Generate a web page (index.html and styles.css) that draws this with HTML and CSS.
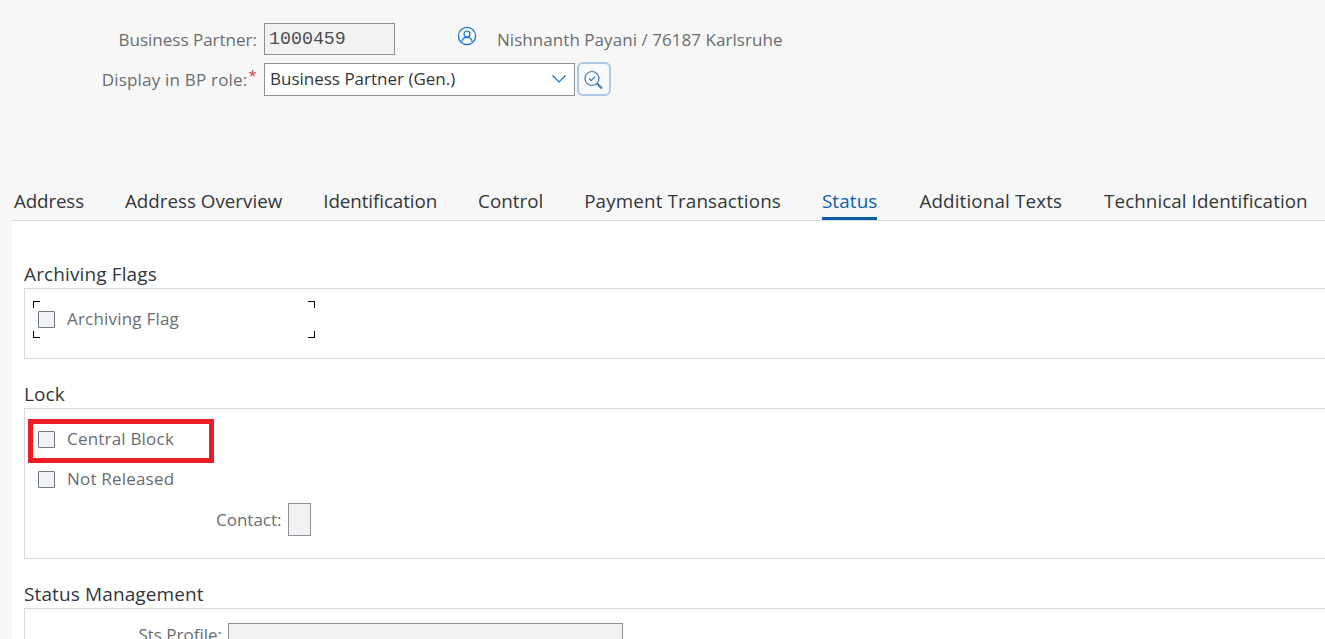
FILE: index.html
```html
<!DOCTYPE html>
<html lang="en">
<head>
    <meta charset="UTF-8">
    <meta name="viewport" content="width=device-width, initial-scale=1.0">
    <title>Business Partner</title>
    <link rel="stylesheet" href="styles.css">
</head>
<body>
    <header class="bp-header">
        <div class="field-row">
            <label class="field-label label-partner">Business Partner:</label>
            <div class="input-readonly input-partner">1000459</div>
            <svg class="person-icon" width="20" height="20" viewBox="0 0 20 20" fill="none" stroke="#0a6ed1" stroke-width="1.2">
                <circle cx="10" cy="10" r="8.6"/>
                <circle cx="10" cy="8" r="3"/>
                <path d="M4.8 15.6c.5-2.8 2.6-4.2 5.2-4.2s4.700 1.400 5.200 4.200"/>
            </svg>
            <span class="partner-name">Nishnanth Payani / 76187 Karlsruhe</span>
        </div>
        <div class="field-row role-row">
            <label class="field-label label-role">Display in BP role:<span class="required">*</span></label>
            <div class="select-box">
                <span>Business Partner (Gen.)</span>
                <svg width="16" height="10" viewBox="0 0 16 10" fill="none" stroke="#0a6ed1" stroke-width="1.2">
                    <path d="M1.500 1.500L8 8l6.500-6.500"/>
                </svg>
            </div>
            <button class="icon-button" type="button">
                <svg width="20" height="20" viewBox="0 0 20 20" fill="none" stroke="#3f7cb5" stroke-width="1.200">
                    <circle cx="8" cy="8.500" r="7"/>
                    <path d="M5 8.500l2.200 2.200 3.800-4.200"/>
                    <path d="M13 13.500l5 5" stroke-width="2.200"/>
                </svg>
            </button>
        </div>
    </header>

    <nav class="tabs">
        <a class="tab tab-first">Address</a>
        <a class="tab">Address Overview</a>
        <a class="tab tab-narrow">Identification</a>
        <a class="tab">Control</a>
        <a class="tab tab-wide">Payment Transactions</a>
        <a class="tab tab-wide tab-active">Status</a>
        <a class="tab tab-wide tab-late">Additional Texts</a>
        <a class="tab tab-last">Technical Identification</a>
    </nav>

    <main class="content">
        <h2 class="section-title title-first">Archiving Flags</h2>
        <section class="panel panel-archive">
            <div class="focus-frame">
                <i class="corner corner-tl"></i>
                <i class="corner corner-tr"></i>
                <i class="corner corner-bl"></i>
                <i class="corner corner-br"></i>
                <div class="check-row">
                    <span class="checkbox"></span>
                    <span class="check-label">Archiving Flag</span>
                </div>
            </div>
        </section>

        <h2 class="section-title">Lock</h2>
        <section class="panel panel-lock">
            <div class="check-row row-marked">
                <span class="checkbox"></span>
                <span class="check-label">Central Block</span>
                <i class="red-box"></i>
            </div>
            <div class="check-row row-second">
                <span class="checkbox"></span>
                <span class="check-label">Not Released</span>
            </div>
            <div class="contact-row">
                <label class="field-label">Contact:</label>
                <div class="input-contact"></div>
            </div>
        </section>

        <h2 class="section-title">Status Management</h2>
        <section class="panel panel-status">
            <label class="field-label label-profile">Sts Profile:</label>
            <div class="input-profile"></div>
        </section>
    </main>
</body>
</html>
```

FILE: styles.css
```css
html, body {
    height: 639px;
    overflow: hidden;
}

body {
    margin: 0;
    background-color: #f7f7f7;
    font-family: 'Open Sans', 'Noto Sans', sans-serif;
    color: #32363a;
}

.bp-header {
    height: 185px;
    padding-top: 23px;
    box-sizing: border-box;
}

.field-row {
    display: flex;
    align-items: center;
    height: 32px;
}

.role-row {
    margin-top: 8px;
}

.field-label {
    font-size: 17px;
    color: #6a6d70;
    text-align: right;
}

.label-partner {
    width: 257px;
    margin-right: 7px;
}

.label-role {
    width: 257px;
    margin-right: 7px;
    letter-spacing: .2px;
}

.required {
    color: #d9363e;
    font-size: 15px;
    position: relative;
    top: -5px;
    margin-left: 1px;
}

.input-readonly {
    box-sizing: border-box;
    height: 32px;
    border: 1px solid #89919a;
    background-color: #f2f2f2;
    color: #4a4d50;
    font-family: 'Liberation Mono', monospace;
    font-size: 18.300px;
    line-height: 30px;
    padding-left: 4px;
}

.input-partner {
    width: 131px;
}

.person-icon {
    margin-left: 62px;
    margin-top: -6px;
}

.partner-name {
    margin-left: 20px;
    font-size: 17px;
    letter-spacing: .05px;
    color: #6a6d70;
}

.select-box {
    box-sizing: border-box;
    width: 311px;
    height: 33px;
    border: 1px solid #89919a;
    background-color: #ffffff;
    display: flex;
    align-items: center;
    justify-content: space-between;
    padding: 0 7px 2px 5px;
    font-size: 17px;
}

.select-box svg {
    margin-top: 2px;
}

.icon-button {
    box-sizing: border-box;
    width: 34px;
    height: 34px;
    margin-left: 2px;
    padding: 2px 0 0;
    border: 2px solid #a9c9e6;
    border-radius: 6px;
    background-color: #f7f9fb;
    display: flex;
    align-items: center;
    justify-content: center;
}

.tabs {
    display: flex;
    gap: 41px;
    height: 35px;
    margin-left: 12px;
    padding-left: 2px;
    border-bottom: 1px solid #d9d9d9;
    white-space: nowrap;
}

.tab {
    font-size: 18.800px;
    line-height: 32px;
    height: 35px;
    box-sizing: border-box;
    color: #32363a;
}

.tab-first {
    letter-spacing: -.15px;
}

.tab-narrow {
    letter-spacing: -.08px;
}

.tab-wide {
    letter-spacing: .15px;
}

.tab-late {
    margin-left: 1px;
}

.tab-last {
    margin-left: 1px;
    letter-spacing: .08px;
}

.tab-active {
    color: #0a5ea8;
    border-bottom: 3px solid #0a5ea8;
}

.content {
    margin-left: 12px;
    margin-right: -6px;
    padding-left: 12px;
    background-color: #ffffff;
    height: 418px;
    overflow: hidden;
}

.section-title {
    margin: 22px 0 0;
    height: 27px;
    font-size: 19px;
    font-weight: 400;
    letter-spacing: .12px;
    line-height: 26px;
}

.title-first {
    margin-top: 0;
    padding-top: 40px;
}

.panel {
    box-sizing: border-box;
    border: 1px solid #d9d9d9;
    background-color: #ffffff;
}

.panel-archive {
    height: 71px;
    padding: 12px 0 0 8px;
}

.panel-lock {
    height: 151px;
    padding: 20px 0 0 13px;
}

.panel-status {
    height: 60px;
    display: flex;
    align-items: flex-start;
    padding-top: 14px;
}

.focus-frame {
    position: relative;
    width: 282px;
    height: 37px;
    padding: 8px 0 0 5px;
    box-sizing: border-box;
}

.corner {
    position: absolute;
    width: 6px;
    height: 6px;
    border: 0 solid #000000;
}

.corner-tl { top: 0; left: 0; border-width: 1px 0 0 1px; }
.corner-tr { top: 0; right: 0; border-width: 1px 1px 0 0; }
.corner-bl { bottom: 0; left: 0; border-width: 0 0 1px 1px; }
.corner-br { bottom: 0; right: 0; border-width: 0 1px 1px 0; }

.check-row {
    display: flex;
    align-items: center;
    height: 20px;
    position: relative;
}

.row-second {
    margin-top: 20px;
}

.checkbox {
    box-sizing: border-box;
    width: 17px;
    height: 17px;
    border: 1px solid #6a7585;
    border-radius: 1px;
    background-color: #f2f2f2;
}

.check-label {
    margin: -2px 0 0 12px;
    font-size: 17px;
    letter-spacing: .2px;
    color: #6a6d70;
}

.red-box {
    position: absolute;
    left: -10px;
    top: -10px;
    width: 176px;
    height: 34px;
    border: 5px solid #ee1c25;
}

.contact-row {
    display: flex;
    align-items: center;
    margin-top: 14px;
    margin-left: 178px;
}

.input-contact {
    box-sizing: border-box;
    width: 23px;
    height: 33px;
    margin-left: 6px;
    border: 1px solid #89919a;
    background-color: #f2f2f2;
}

.label-profile {
    width: 197px;
}

.input-profile {
    box-sizing: border-box;
    width: 395px;
    height: 33px;
    margin-left: 6px;
    border: 1px solid #89919a;
    background-color: #f2f2f2;
}
```
